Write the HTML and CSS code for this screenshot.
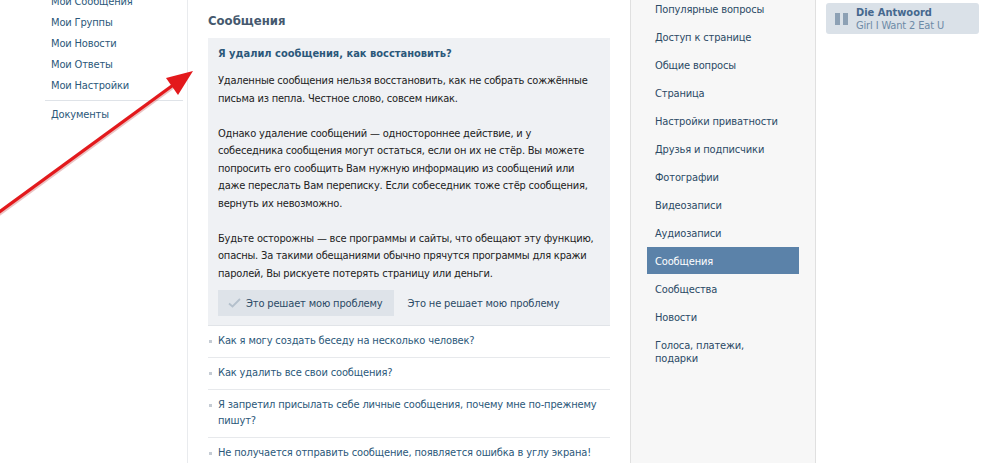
FILE: index.html
```
<!DOCTYPE html>
<html lang="ru">
<head>
  <meta charset="UTF-8">
  <title>Помощь — Сообщения</title>
  <link rel="stylesheet" href="styles.css">
</head>
<body>
  <div class="page">
    <div class="left-nav">
      <ul class="nav-list">
        <li><a href="#">Мои Сообщения</a></li>
        <li><a href="#">Мои Группы</a></li>
        <li><a href="#">Мои Новости</a></li>
        <li><a href="#">Мои Ответы</a></li>
        <li><a href="#">Мои Настройки</a></li>
      </ul>
      <div class="nav-sep"></div>
      <ul class="nav-list">
        <li><a href="#">Документы</a></li>
      </ul>
    </div>

    <div class="main">
      <h2 class="section-title">Сообщения</h2>
      <div class="faq-open">
        <div class="faq-q">Я удалил сообщения, как восстановить?</div>
        <div class="faq-a">
          <p>Удаленные сообщения нельзя восстановить, как не собрать сожжённые письма из пепла. Честное слово, совсем никак.</p>
          <p>Однако удаление сообщений — одностороннее действие, и у<br>собеседника сообщения могут остаться, если он их не стёр. Вы можете попросить его сообщить Вам нужную информацию из сообщений или даже переслать Вам переписку. Если собеседник тоже стёр сообщения, вернуть их невозможно.</p>
          <p>Будьте осторожны — все программы и сайты, что обещают эту функцию, опасны. За такими обещаниями обычно прячутся программы для кражи паролей, Вы рискуете потерять страницу или деньги.</p>
        </div>
        <div class="faq-buttons">
          <button class="btn-yes">
            <svg width="13" height="10" viewBox="0 0 13 10"><path d="M1 5.5 L4.5 8.5 L12 1" fill="none" stroke="#b4c0cc" stroke-width="1.8"/></svg>
            Это решает мою проблему
          </button>
          <button class="btn-no">Это не решает мою проблему</button>
        </div>
      </div>
      <ul class="faq-list">
        <li><a href="#">Как я могу создать беседу на несколько человек?</a></li>
        <li><a href="#">Как удалить все свои сообщения?</a></li>
        <li><a href="#">Я запретил присылать себе личные сообщения, почему мне по-прежнему пишут?</a></li>
        <li><a href="#">Не получается отправить сообщение, появляется ошибка в углу экрана!</a></li>
      </ul>
    </div>

    <div class="side">
      <ul class="side-menu">
        <li><a href="#">Популярные вопросы</a></li>
        <li><a href="#">Доступ к странице</a></li>
        <li><a href="#">Общие вопросы</a></li>
        <li><a href="#">Страница</a></li>
        <li><a href="#">Настройки приватности</a></li>
        <li><a href="#">Друзья и подписчики</a></li>
        <li><a href="#">Фотографии</a></li>
        <li><a href="#">Видеозаписи</a></li>
        <li><a href="#">Аудиозаписи</a></li>
        <li class="active"><a href="#">Сообщения</a></li>
        <li><a href="#">Сообщества</a></li>
        <li><a href="#">Новости</a></li>
        <li><a href="#">Голоса, платежи,<br>подарки</a></li>
      </ul>
    </div>

    <div class="right">
      <div class="player">
        <div class="pause"><span></span><span></span></div>
        <div class="track">
          <div class="artist">Die Antwoord</div>
          <div class="song">Girl I Want 2 Eat U</div>
        </div>
      </div>
    </div>
  </div>

  <svg class="arrow" width="200" height="220" viewBox="0 0 200 220">
    <line x1="-2" y1="214" x2="176" y2="84" stroke="#b01010" stroke-opacity="0.25" stroke-width="5"/>
    <line x1="-2" y1="213" x2="176" y2="83" stroke="#e3191c" stroke-width="3.2"/>
    <polygon points="193,71 166,78 178,95" fill="#e3191c"/>
  </svg>
</body>
</html>
```

FILE: styles.css
```
body {
  margin: 0;
  background: #fff;
  font-family: "DejaVu Sans Condensed", "DejaVu Sans", Tahoma, sans-serif;
  font-size: 11px;
  letter-spacing: -0.15px;
  color: #000;
  overflow: hidden;
}

a {
  text-decoration: none;
  color: #2b587a;
}

ul {
  list-style: none;
  margin: 0;
  padding: 0;
}

.page {
  display: flex;
  height: 463px;
}

/* left navigation */
.left-nav {
  width: 187px;
  flex: none;
  border-right: 1px solid #e9ebee;
  margin-top: -9px;
}
.nav-list {
  padding-left: 51px;
}
.nav-list li {
  line-height: 21px;
}
.nav-sep {
  height: 1px;
  background: #dfe3e8;
  margin: 4px 4px 3px 45px;
}

/* main */
.main {
  width: 402px;
  flex: none;
  padding: 12px 20px 0 20px;
}
.section-title {
  font-size: 13px;
  font-weight: bold;
  color: #45596e;
  margin: 0 0 8px 0;
  line-height: 18px;
  letter-spacing: 0;
}
.faq-open {
  background: #eff1f4;
  border-bottom: 1px solid #e1e4e8;
  padding: 8px 10px 9px 10px;
}
.faq-q {
  font-weight: bold;
  color: #2b587a;
  line-height: 16px;
  letter-spacing: 0;
}
.faq-a {
  margin-top: 10px;
  line-height: 17.5px;
  letter-spacing: -0.2px;
  color: #222;
}
.faq-a p {
  margin: 0 0 17.5px 0;
}
.faq-a p:last-child {
  margin: 0;
}
.faq-buttons {
  display: flex;
  margin-top: 8px;
}
.faq-buttons button {
  font-family: inherit;
  font-size: 11px;
  letter-spacing: -0.15px;
  border: none;
  height: 26px;
  padding: 0 11px 0 10px;
  color: #2b4a66;
  background: none;
  display: flex;
  align-items: center;
  gap: 5px;
  white-space: nowrap;
}
.faq-buttons .btn-yes {
  background: #dee3e9;
}
.faq-buttons .btn-no {
  padding-left: 14px;
}

.faq-list li {
  border-bottom: 1px solid #e7e9ec;
  padding: 7px 0 8px 10px;
  line-height: 16px;
  position: relative;
}
.faq-list li::before {
  content: "";
  position: absolute;
  left: 1px;
  top: 14px;
  width: 3px;
  height: 3px;
  background: #c5ccd4;
}
.faq-list li:last-child {
  border-bottom: none;
}

/* side menu */
.side {
  width: 152px;
  flex: none;
  padding: 0 16px;
  background: #f7f7f7;
  border-left: 1px solid #e0e0e0;
  border-right: 1px solid #e0e0e0;
}
.side-menu {
  margin-top: -5px;
}
.side-menu li a {
  display: block;
  padding: 7.5px 8px;
  line-height: 13px;
  color: #2b4a66;
}
.side-menu li.active a {
  background: #5b82a9;
  color: #fff;
  margin-bottom: 1px;
  padding-bottom: 6.5px;
}

/* right column */
.right {
  padding: 3px 0 0 10px;
}
.player {
  width: 153px;
  height: 31px;
  background: #dae1e8;
  border-radius: 3px;
  display: flex;
  align-items: center;
  box-sizing: border-box;
  padding-left: 9px;
  overflow: hidden;
}
.pause {
  display: flex;
  gap: 3px;
  margin-right: 8px;
}
.pause span {
  width: 5px;
  height: 12px;
  background: #8da1b5;
}
.track {
  line-height: 13px;
  white-space: nowrap;
}
.artist {
  font-weight: bold;
  color: #45688e;
  letter-spacing: 0;
}
.song {
  color: #6d8aa6;
}

.arrow {
  position: absolute;
  left: 0;
  top: 0;
}
```
